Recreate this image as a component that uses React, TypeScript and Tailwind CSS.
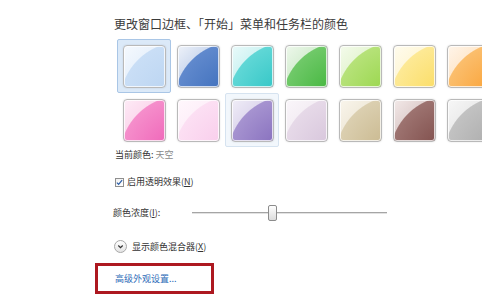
import React from 'react'

type Swatch = { name: string; cls: string; frame?: string }

// glossy Win7-style swatches: saturated arc in the lower right, pale wash upper left
const row1: Swatch[] = [
  { name: '天空', frame: 'border-[#a9c6e6] bg-[#dbe9f8]', cls: 'bg-[radial-gradient(circle_62px_at_140%_140%,#bdd6f2_24px,#c9def6_61px,transparent_62px),linear-gradient(135deg,#f5f9fe,#d6e6f8)]' },
  { name: '黎明', cls: 'bg-[radial-gradient(circle_62px_at_140%_140%,#4574bf_24px,#6089cd_61px,transparent_62px),linear-gradient(135deg,#eef2f9,#9db5df)]' },
  { name: '海洋', cls: 'bg-[radial-gradient(circle_62px_at_140%_140%,#38c8c8_24px,#60d7d6_61px,transparent_62px),linear-gradient(135deg,#eafafa,#a6e8e7)]' },
  { name: '叶', cls: 'bg-[radial-gradient(circle_62px_at_140%_140%,#4ab944_24px,#70c969_61px,transparent_62px),linear-gradient(135deg,#eef8ec,#b2dfac)]' },
  { name: '酸橙', cls: 'bg-[radial-gradient(circle_62px_at_140%_140%,#9dd852_24px,#b6e279_61px,transparent_62px),linear-gradient(135deg,#f4fbec,#d1ecb1)]' },
  { name: '阳光', cls: 'bg-[radial-gradient(circle_62px_at_140%_140%,#fbde6a_24px,#fde995_61px,transparent_62px),linear-gradient(135deg,#fffcee,#fdefba)]' },
  { name: '南瓜', cls: 'bg-[radial-gradient(circle_62px_at_140%_140%,#faa63e_24px,#fbbe6d_61px,transparent_62px),linear-gradient(135deg,#fff5ea,#fdd6a6)]' },
]

const row2: Swatch[] = [
  { name: '紫红色', cls: 'bg-[radial-gradient(circle_62px_at_140%_140%,#f06bbb_24px,#f58ecb_61px,transparent_62px),linear-gradient(135deg,#fdebf6,#f9bddf)]' },
  { name: '粉红色', cls: 'bg-[radial-gradient(circle_62px_at_140%_140%,#f9cfec_24px,#fcdff3_61px,transparent_62px),linear-gradient(135deg,#fff7fc,#fbe5f5)]' },
  { name: '小南瓜', frame: 'border-[#d6e3f0] bg-[#f2f7fc]', cls: 'bg-[radial-gradient(circle_62px_at_140%_140%,#8b74c0_24px,#a693d0_61px,transparent_62px),linear-gradient(135deg,#f0edf7,#c7bbe1)]' },
  { name: '大红', cls: 'bg-[radial-gradient(circle_62px_at_140%_140%,#d9c8dd_24px,#e6d9e8_61px,transparent_62px),linear-gradient(135deg,#faf6fa,#eae0eb)]' },
  { name: '霜', cls: 'bg-[radial-gradient(circle_62px_at_140%_140%,#ccbc94_24px,#dbcfb0_61px,transparent_62px),linear-gradient(135deg,#f9f5ec,#e4dac2)]' },
  { name: '巧克力', cls: 'bg-[radial-gradient(circle_62px_at_140%_140%,#845451_24px,#9d7370_61px,transparent_62px),linear-gradient(135deg,#f2e9e8,#c6abaa)]' },
  { name: '石板', cls: 'bg-[radial-gradient(circle_62px_at_140%_140%,#afafaf_24px,#c2c2c2_61px,transparent_62px),linear-gradient(135deg,#f7f7f7,#dadada)]' },
]

function Cell({ s }: { s: Swatch }) {
  return (
    <div className={`w-[54px] h-[54px] flex items-center justify-center rounded-[2px] border ${s.frame ?? 'border-transparent'}`}>
      <div
        title={s.name}
        className={`w-[43px] h-[43px] rounded-[4px] border border-[#b9b9b9] shadow-[inset_0_0_0_1px_rgba(255,255,255,0.75),0_0_2px_rgba(0,0,0,0.12)] ${s.cls}`}
      />
    </div>
  )
}

export default function App() {
  return (
    <div
      className="relative w-[482px] h-[300px] overflow-hidden bg-white text-[#333]"
      style={{ fontFamily: '"Noto Sans CJK SC", "Noto Sans", sans-serif' }}
    >
      <div className="flex flex-col pl-[113px] pt-[17px]">
        {/* ── heading ── */}
        <div className="text-[12px] leading-[14px] ml-px text-[#3a3a3a] whitespace-nowrap">
          更改窗口边框、「开始」菜单和任务栏的颜色
        </div>

        {/* ── colour grid ── */}
        <div className="mt-[8px] ml-[4px] grid grid-cols-[repeat(7,54px)] w-max">
          {row1.map(s => <Cell key={s.name} s={s} />)}
          {row2.map(s => <Cell key={s.name} s={s} />)}
        </div>

        <div className="mt-[2px] ml-[2px] text-[9px] leading-[12px] whitespace-nowrap">
          当前颜色: <span className="text-[#8a8a8a]">天空</span>
        </div>

        {/* ── transparency ── */}
        <div className="mt-[15px] ml-[2px] flex items-center gap-[3px] h-[12px]">
          <div className="w-[9px] h-[9px] border border-[#8f8f8f] bg-gradient-to-br from-[#f0f0f0] to-white flex items-center justify-center">
            <svg viewBox="0 0 8 8" className="w-[7px] h-[7px]">
              <path d="M1 4.2 L3 6.2 L7 1.2" fill="none" stroke="#2b5ea8" strokeWidth="1.4" />
            </svg>
          </div>
          <span className="text-[9px] leading-[12px] whitespace-nowrap">
            启用透明效果(<span className="underline">N</span>)
          </span>
        </div>

        {/* ── intensity slider ── */}
        <div className="mt-[17px] flex items-center h-[16px]">
          <span className="text-[9px] leading-[12px] whitespace-nowrap w-[79px]">
            颜色浓度(<span className="underline">I</span>):
          </span>
          <div className="relative w-[195px] h-[16px] flex items-center">
            <div className="w-full h-[2px] bg-[#a5a5a5] border-b border-[#e2e2e2]" />
            <div className="absolute left-[76px] top-0 w-[9px] h-[16px] rounded-[2px] border border-[#8c8c8c] bg-gradient-to-b from-white to-[#dcdcdc]" />
          </div>
        </div>

        {/* ── mixer toggle ── */}
        <div className="mt-[19px] ml-px flex items-center gap-[5px] h-[13px]">
          <div className="w-[13px] h-[13px] rounded-full border border-[#a8a8a8] bg-gradient-to-b from-white to-[#e4e4e4] flex items-center justify-center">
            <svg viewBox="0 0 8 8" className="w-[7px] h-[7px]">
              <path d="M1.5 2.8 L4 5.3 L6.5 2.8" fill="none" stroke="#333" strokeWidth="1.4" />
            </svg>
          </div>
          <span className="text-[9px] leading-[12px] whitespace-nowrap">
            显示颜色混合器(<span className="underline">X</span>)
          </span>
        </div>

        {/* ── advanced link, boxed in red ── */}
        <div className="mt-[10px] -ml-[18px] w-[119px] h-[31px] border-[3px] border-[#ad1820] flex items-center pl-[17px] pt-px">
          <span className="text-[9px] leading-[12px] text-[#2d6cb8] whitespace-nowrap">高级外观设置...</span>
        </div>
      </div>
    </div>
  )
}
